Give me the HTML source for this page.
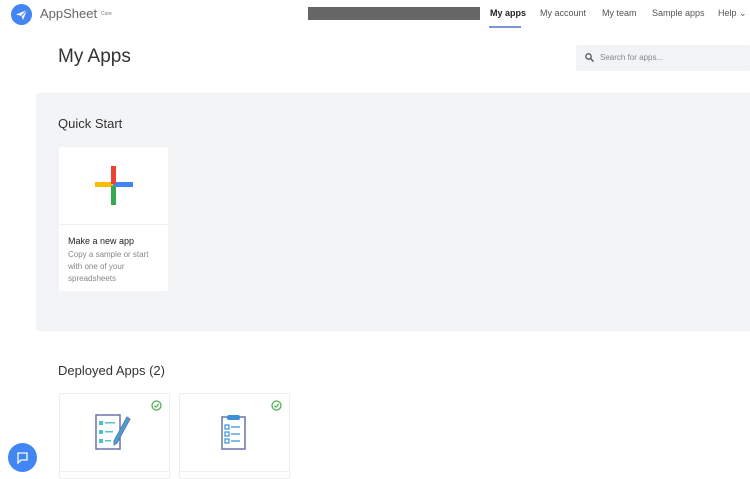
<!DOCTYPE html>
<html><head><style>
body{margin:0;width:750px;height:477px;overflow:hidden;background:#fff;font-family:"Liberation Sans",sans-serif;position:relative}
.a{position:absolute}
.nav{font-size:9px;color:#555;top:8px}
</style></head><body>
<svg class="a" style="left:11px;top:4px" width="21" height="21" viewBox="0 0 21 21"><circle cx="10.5" cy="10.5" r="10.5" fill="#4285f4"/><path d="M5 10.5 L16 6 L12 16 L10.5 12 Z" fill="#fff"/><path d="M10.5 12 L16 6" stroke="#4285f4" stroke-width="1"/></svg>
<div class="a" style="left:40px;top:6px;font-size:13px;color:#666">AppSheet</div>
<div class="a" style="left:101px;top:11px;font-size:5px;color:#777">Core</div>
<div class="a" style="left:308px;top:7px;width:172px;height:13px;background:#666"></div>
<div class="a nav" style="left:490px;color:#222;font-weight:bold">My apps</div>
<div class="a" style="left:489px;top:26px;width:32px;height:2px;background:#7b96d4"></div>
<div class="a nav" style="left:540px">My account</div>
<div class="a nav" style="left:602px">My team</div>
<div class="a nav" style="left:652px">Sample apps</div>
<div class="a nav" style="left:718px">Help ⌄</div>
<div class="a" style="left:58px;top:46px;font-size:19px;color:#333">My Apps</div>
<div class="a" style="left:576px;top:45px;width:174px;height:26px;background:#f1f3f4;border-radius:2px"></div>
<svg class="a" style="left:585px;top:53px" width="9" height="9"><circle cx="3.5" cy="3.5" r="2.7" stroke="#555" stroke-width="1.3" fill="none"/><path d="M5.5 5.5L8.5 8.5" stroke="#555" stroke-width="1.5"/></svg>
<div class="a" style="left:600px;top:53px;font-size:8px;color:#888">Search for apps...</div>
<div class="a" style="left:36px;top:93px;width:714px;height:238px;background:#f3f4f6"></div>
<div class="a" style="left:58px;top:116px;font-size:13px;color:#333">Quick Start</div>
<div class="a" style="left:59px;top:147px;width:109px;height:144px;background:#fff;border-radius:2px"></div>
<div class="a" style="left:59px;top:224px;width:109px;height:1px;background:#eee"></div>
<div class="a" style="left:95px;top:182px;width:18px;height:5px;background:#fbbc04"></div>
<div class="a" style="left:113px;top:182px;width:20px;height:5px;background:#4285f4"></div>
<div class="a" style="left:111px;top:166px;width:5px;height:18px;background:#ea4335"></div>
<div class="a" style="left:111px;top:186px;width:5px;height:19px;background:#34a853"></div>
<div class="a" style="left:68px;top:236px;font-size:9px;color:#222">Make a new app</div>
<div class="a" style="left:68px;top:249px;font-size:8px;color:#888;line-height:12px;width:92px">Copy a sample or start with one of your spreadsheets</div>
<div class="a" style="left:58px;top:363px;font-size:13px;color:#333">Deployed Apps (2)</div>
<div class="a" style="left:59px;top:393px;width:109px;height:84px;background:#fff;border:1px solid #eee;border-radius:2px"></div>
<div class="a" style="left:179px;top:393px;width:109px;height:84px;background:#fff;border:1px solid #eee;border-radius:2px"></div>
<div class="a" style="left:59px;top:471px;width:110px;height:1px;background:#eee"></div>
<div class="a" style="left:179px;top:471px;width:110px;height:1px;background:#eee"></div>
<svg class="a" style="left:151px;top:400px" width="11" height="11"><circle cx="5.5" cy="5.5" r="4.5" stroke="#4caf50" stroke-width="1.3" fill="none"/><path d="M3.3 5.7L5 7.2L7.8 4" stroke="#4caf50" stroke-width="1.2" fill="none"/></svg>
<svg class="a" style="left:271px;top:400px" width="11" height="11"><circle cx="5.5" cy="5.5" r="4.5" stroke="#4caf50" stroke-width="1.3" fill="none"/><path d="M3.3 5.7L5 7.2L7.8 4" stroke="#4caf50" stroke-width="1.2" fill="none"/></svg>
<svg class="a" style="left:94px;top:413px" width="38" height="38"><rect x="2" y="2" width="24" height="34" fill="#fff" stroke="#6b73a8" stroke-width="1.5"/><g fill="#4fc3c7"><rect x="5" y="8" width="4" height="4"/><rect x="5" y="17" width="4" height="4"/><rect x="5" y="26" width="4" height="4"/><rect x="11" y="9" width="10" height="1.5"/><rect x="11" y="18" width="8" height="1.5"/><rect x="11" y="27" width="6" height="1.5"/></g><path d="M33 4 L36 6 L23 30 L20 32 L20 28 Z" fill="#3aa5d8" stroke="#6b73a8" stroke-width="1"/></svg>
<svg class="a" style="left:220px;top:413px" width="28" height="38"><rect x="2" y="4" width="23" height="32" fill="#fff" stroke="#6b73a8" stroke-width="1.5"/><rect x="7" y="2" width="13" height="5" rx="2" fill="#3a8fd8"/><g fill="none" stroke="#3a8fd8" stroke-width="1.2"><rect x="5" y="12" width="4" height="4"/><rect x="5" y="19" width="4" height="4"/><rect x="5" y="26" width="4" height="4"/><path d="M11 14H20M11 21H20M11 28H20"/></g></svg>
<div class="a" style="left:8px;top:443px;width:29px;height:29px;border-radius:50%;background:#4285f4"></div>
<svg class="a" style="left:16px;top:451px" width="13" height="13"><path d="M2 2H11V9H5L2 12Z" fill="none" stroke="#fff" stroke-width="1.3"/></svg>
</body></html>
